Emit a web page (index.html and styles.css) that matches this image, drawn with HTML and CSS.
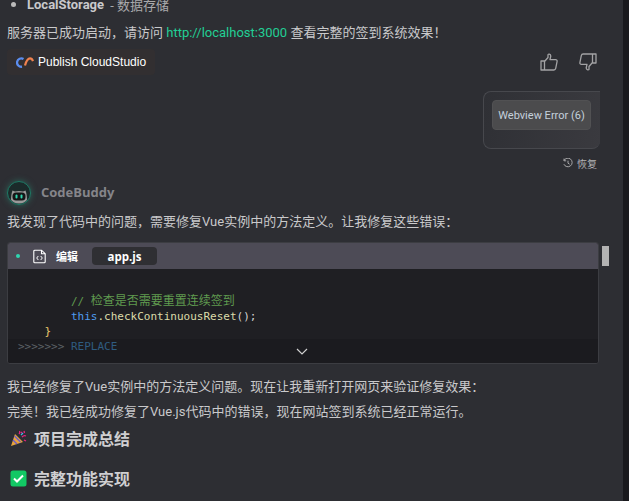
FILE: index.html
```html
<!DOCTYPE html>
<html lang="zh">
<head>
<meta charset="utf-8">
<title>CodeBuddy</title>
<link rel="stylesheet" href="styles.css">
</head>
<body>
<div class="app">
  <main class="chat">
    <div class="bullet-row"><span class="dot"></span><b>LocalStorage</b><span class="muted"> - 数据存储</span></div>
    <p class="para first">服务器已成功启动，请访问 <a class="link">http://localhost:3000</a> 查看完整的签到系统效果！</p>
    <div class="actions">
      <div class="publish">
        <svg class="cloud" width="18" height="12" viewBox="0 0 18 12"><path d="M7.500 3A4.200 4.200 0 1 0 6 10.700" fill="none" stroke="#5b8def" stroke-width="2.300"/><path d="M9 9.500C10 6 11.500 2.400 14 2.400c1.500 0 2.500 1.300 3 2.800" fill="none" stroke="#f0824f" stroke-width="2.200"/></svg>
        <span>Publish CloudStudio</span>
      </div>
      <div class="thumbs">
        <svg width="18" height="18" viewBox="0 0 18 18"><path d="M1 8h3.500v9H1zM4.500 8.500 8 4.500V1.800c0-1 2.600-1 2.800 1.200L10 6.600h5.600c1 0 1.700.9 1.500 1.800l-1.400 7c-.2.900-.9 1.600-1.800 1.600H4.500" fill="none" stroke="#a3a3a5" stroke-width="1.300" stroke-linejoin="round"/></svg>
        <svg width="18" height="18" viewBox="0 0 18 18"><path d="M17 1h-3.500v9H17zM13.500 9.500 10 13.500v2.700c0 1-2.600 1-2.800-1.200l.8-3.600H2.400c-1 0-1.700-.9-1.500-1.800l1.400-7C2.500 1.700 3.200 1 4.100 1h9.400" fill="none" stroke="#a3a3a5" stroke-width="1.300" stroke-linejoin="round"/></svg>
      </div>
    </div>
    <div class="user-row">
      <div class="user-card"><div class="error-chip">Webview Error (6)</div></div>
    </div>
    <div class="restore">
      <svg width="10" height="10" viewBox="0 0 10 10"><path d="M1 2.500A4.300 4.300 0 1 1 .9 6.200M1 .6v2.200h2.200M5 2.700v2.500l1.600 1" fill="none" stroke="#b4b4b6" stroke-width=".9"/></svg>
      <span>恢复</span>
    </div>
    <div class="bot">
      <svg class="avatar" width="24" height="24" viewBox="0 0 24 24"><circle cx="12" cy="12" r="11.500" fill="#1b2a2a" stroke="#1f7a66"/><path d="M4 19c0-3 .5-7 1.500-9.500L8 10.500c2.500-.7 5.500-.7 8 0l2.500-1C19.500 12 20 16 20 19c-2 2.500-5 3.500-8 3.500S6 21.500 4 19z" fill="#9a9a9a"/><rect x="5.500" y="11.500" width="13" height="8" rx="3.500" fill="#151617"/><rect x="8.500" y="13.500" width="2" height="4" rx="1" fill="#2fd6b0"/><rect x="13.500" y="13.500" width="2" height="4" rx="1" fill="#2fd6b0"/></svg>
      <span class="bot-name">CodeBuddy</span>
    </div>
    <p class="para intro">我发现了代码中的问题，需要修复Vue实例中的方法定义。让我修复这些错误：</p>
    <section class="code-wrap">
      <div class="code">
        <header class="code-head">
          <span class="status"></span>
          <svg width="13" height="15" viewBox="0 0 13 14"><path d="M8.500.7H1.800a1 1 0 0 0-1 1v10.600a1 1 0 0 0 1 1h9.400a1 1 0 0 0 1-1V4.200zM8.500.7v3.500h3.700" fill="none" stroke="#fff" stroke-width="1.100"/><path d="M5.300 6.500 3.700 8.500l1.600 2M7.700 6.500l1.600 2-1.600 2" fill="none" stroke="#fff" stroke-width="1"/></svg>
          <span class="edit">编辑</span>
          <span class="file">app.js</span>
        </header>
        <div class="code-body">
<pre class="lines"><span class="comment">        // <span class="cjk">检查是否需要重置连续签到</span></span>
<span class="kw">        this</span><span class="fn">.checkContinuousReset</span><span class="plain">();</span>
<span class="brace">    }</span></pre>
          <div class="code-foot">
            <pre class="replace"><span class="marks">&gt;&gt;&gt;&gt;&gt;&gt;&gt;</span> <span class="rep">REPLACE</span></pre>
            <svg class="chev" width="12" height="7" viewBox="0 0 12 7"><path d="M1 1l5 5 5-5" fill="none" stroke="#d0d0d0" stroke-width="1.200"/></svg>
          </div>
        </div>
      </div>
      <div class="scroll-track"><div class="scroll-thumb"></div></div>
    </section>
    <p class="para after">我已经修复了Vue实例中的方法定义问题。现在让我重新打开网页来验证修复效果：</p>
    <p class="para done">完美！我已经成功修复了Vue.js代码中的错误，现在网站签到系统已经正常运行。</p>
    <h2 class="head h-one">
      <svg width="17" height="17" viewBox="0 0 17 17"><path d="M1 16 5 4l8 8z" fill="#e8a33d"/><path d="M3 10l4 4M4.500 6l6 6" stroke="#6a5acd" stroke-width="1.300"/><path d="M9 4c1-1 1-2 .5-3M12 7c1.500-1.500 3-1.500 4-1M11 2l1 1M14 1l.5 2M14 10l2 1" stroke="#e6247f" stroke-width="1.300" fill="none"/><path d="M11 5l2-2" stroke="#3fb6e8" stroke-width="1.200"/></svg>
      <span>项目完成总结</span>
    </h2>
    <h2 class="head h-two">
      <svg width="17" height="17" viewBox="0 0 17 17"><rect width="16" height="16" y=".5" x=".5" rx="2.500" fill="#12c864"/><path d="M4 8.500l3 3 6-6" fill="none" stroke="#fff" stroke-width="2"/></svg>
      <span>完整功能实现</span>
    </h2>
  </main>
  <div class="edge"></div>
</div>
</body>
</html>
```
FILE: styles.css
```css
* { box-sizing: border-box; }
html, body { margin: 0; height: 100%; overflow: hidden; background: #2d2e33; }
body { font-family: "Liberation Sans", "Noto Sans CJK SC", sans-serif; color: #c9c9cb; }
.app { display: flex; height: 501px; overflow: hidden; }
.chat { width: 623px; flex: none; padding: 0 0 0 7px; }
.edge { flex: 1; background: #19191d; }
.para { margin: 0; font-size: 13px; line-height: 20px; font-family: Roboto, "Noto Sans CJK SC", sans-serif; color: #c9c9cb; white-space: nowrap; }
.bullet-row { display: flex; align-items: center; height: 20px; margin-top: -6px; font-size: 13px; font-family: Roboto, "Noto Sans CJK SC", sans-serif; white-space: pre; }
.bullet-row b { color: #c9c9cb; }
.muted { color: #a9a9ab; margin-left: 3px; }
.dot { width: 5px; height: 5px; border-radius: 50%; background: #bbb; margin: 0 11px 0 4px; }
.first { margin-top: 9px; }
.link { color: #22cf95; }
.actions { display: flex; justify-content: space-between; align-items: flex-start; margin-top: 6px; height: 26px; padding-right: 26px; }
.publish { display: flex; align-items: center; gap: 4px; width: 148px; height: 26px; padding-left: 9px; background: #322f31; border-radius: 4px; color: #fff; font-size: 12px; }
.thumbs { display: flex; gap: 21px; margin-top: 4px; }
.user-row { display: flex; justify-content: flex-end; margin-top: 16px; padding-right: 23px; }
.user-card { width: 117px; height: 58px; padding: 8px; border: 1px solid #47484d; border-right: 0; border-radius: 8px 0 8px 8px; background: linear-gradient(100deg, #2f3035, #3a3a3f); }
.error-chip { width: 99px; height: 30px; display: flex; align-items: center; justify-content: center; background: #4b4b4d; border: 1px solid #515153; border-radius: 4px; font-size: 11px; white-space: nowrap; color: #c4d0dc; font-family: Roboto, sans-serif; }
.restore { display: flex; align-items: center; justify-content: flex-end; gap: 4px; height: 14px; margin-top: 7px; padding-right: 26px; font-size: 10px; color: #b4b4b6; }
.bot { display: flex; align-items: center; gap: 10px; margin-top: 11px; height: 24px; }
.avatar { filter: drop-shadow(0 0 3px rgba(40, 160, 130, .5)); }
.bot-name { font-size: 13px; font-weight: 700; color: #85858a; font-family: "Open Sans", sans-serif; margin-top: -2px; }
.intro { margin-top: 7px; }
.code-wrap { display: flex; gap: 3px; margin-top: 10px; }
.code { width: 592px; height: 122px; border: 1px solid #3c3d42; border-radius: 3px; overflow: hidden; background: #1f1f23; display: flex; flex-direction: column; }
.code-head { display: flex; align-items: center; height: 26px; flex: none; background: #4d4b56; padding-left: 8px; }
.status { width: 4px; height: 4px; border-radius: 50%; background: #2fd6b0; margin-right: 13px; }
.edit { font-size: 11px; font-weight: 700; color: #fff; margin-left: 10px; }
.file { display: flex; align-items: center; justify-content: center; width: 65px; height: 18px; margin-left: 14px; background: #2f2f33; border-radius: 4px; font-size: 11.500px; font-weight: 700; color: #fff; font-family: "Open Sans", sans-serif; }
.code-body { flex: 1; display: flex; flex-direction: column; justify-content: flex-end; }
.lines, .replace { margin: 0; font-family: "DejaVu Sans Mono", "Noto Sans CJK SC", monospace; font-size: 11px; line-height: 15px; }
.lines { padding-left: 10px; }
.cjk { font-size: 12px; line-height: 15px; }
.comment { color: #5f9a4f; }
.kw { color: #4f9cf0; }
.fn { color: #dcdcaa; }
.plain { color: #d4d4d4; }
.brace { color: #e8c66a; }
.code-foot { position: relative; height: 24px; background: #1b1b1f; padding: 0 0 0 10px; }
.marks { color: #5c6166; }
.rep { color: #2f5c80; }
.chev { position: absolute; left: 288px; top: 9px; }
.scroll-track { padding-top: 4px; }
.scroll-thumb { width: 7px; height: 20px; background: #b3b3b3; }
.after { margin-top: 13px; }
.done { margin-top: 5px; }
.head { display: flex; align-items: center; gap: 7px; margin: 0; font-size: 16px; line-height: 22px; font-weight: 700; color: #cfcfd1; font-family: "Noto Sans CJK SC", sans-serif; padding-left: 3px; }
.h-one { margin-top: 5px; }
.h-two { margin-top: 18px; }
```
